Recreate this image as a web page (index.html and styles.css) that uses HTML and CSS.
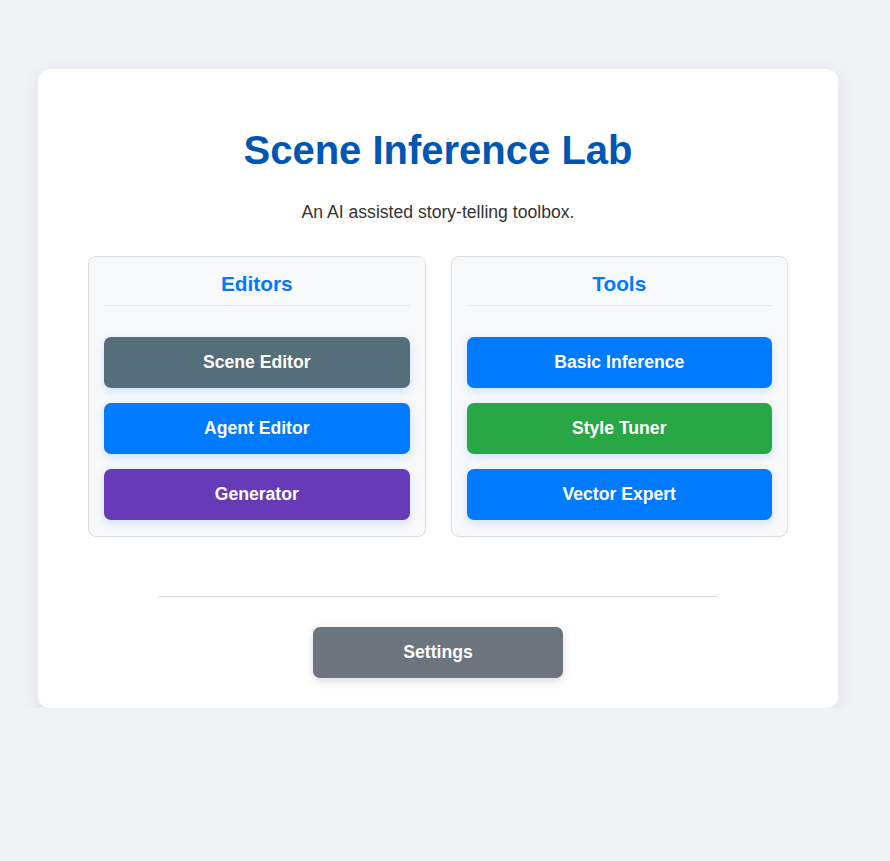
FILE: index.html
```html
<!DOCTYPE html>
<html lang="en">
<head>
<meta charset="utf-8">
<title>Scene Inference Lab</title>
<link rel="stylesheet" href="styles.css">
</head>
<body>
<main class="card">
  <h1 class="title">Scene Inference Lab</h1>
  <p class="subtitle">An AI assisted story-telling toolbox.</p>
  <div class="panels">
    <section class="panel">
      <h2 class="panel-title">Editors</h2>
      <div class="btn-list">
        <button class="btn btn-slate">Scene Editor</button>
        <button class="btn btn-blue">Agent Editor</button>
        <button class="btn btn-purple">Generator</button>
      </div>
    </section>
    <section class="panel">
      <h2 class="panel-title">Tools</h2>
      <div class="btn-list">
        <button class="btn btn-blue">Basic Inference</button>
        <button class="btn btn-green">Style Tuner</button>
        <button class="btn btn-blue">Vector Expert</button>
      </div>
    </section>
  </div>
  <hr class="divider">
  <div class="footer">
    <button class="btn btn-gray btn-settings">Settings</button>
  </div>
</main>
</body>
</html>
```

FILE: styles.css
```css
html, body {
  margin: 0;
  padding: 0;
}
body {
  background: #f0f2f5;
  font-family: "Liberation Sans", Arial, Helvetica, sans-serif;
  color: #333;
}
.card {
  box-sizing: border-box;
  width: 800px;
  margin: 69px 0 0 38px;
  padding: 58px 50px 30px;
  background: #fff;
  border-radius: 12px;
  box-shadow: 0 4px 20px rgba(0, 0, 0, 0.08);
}
.title {
  margin: 0;
  text-align: center;
  font-size: 40px;
  line-height: 46px;
  font-weight: bold;
  color: #0056b3;
}
.subtitle {
  margin: 29px 0 0;
  text-align: center;
  font-size: 17.6px;
  line-height: 20px;
  color: #333;
}
.panels {
  display: grid;
  grid-template-columns: 1fr 1fr;
  gap: 25px;
  margin-top: 34px;
}
.panel {
  background: #f8f9fa;
  border: 1px solid #dcdde0;
  border-radius: 8px;
  padding: 15px 15px 16px;
}
.panel-title {
  margin: 0 0 31px;
  padding-bottom: 10px;
  border-bottom: 1px solid #e6e7ea;
  text-align: center;
  font-size: 20.8px;
  line-height: 23px;
  font-weight: bold;
  color: #007bff;
}
.btn-list {
  display: flex;
  flex-direction: column;
  gap: 15px;
}
.btn {
  display: block;
  height: 51px;
  width: 100%;
  border: none;
  border-radius: 7px;
  font-family: "Liberation Sans", Arial, Helvetica, sans-serif;
  font-size: 17.6px;
  font-weight: bold;
  color: #fff;
  cursor: pointer;
  box-shadow: 0 3px 10px rgba(0, 123, 255, 0.18);
}
.btn-slate { background: #546e7a; }
.btn-blue { background: #007bff; }
.btn-purple { background: #673ab7; }
.btn-green { background: #28a745; }
.btn-gray {
  background: #6c757d;
  box-shadow: 0 3px 10px rgba(0, 0, 0, 0.15);
}
.divider {
  width: 560px;
  margin: 59px auto 0;
  border: none;
  border-top: 1px solid #dddddd;
  height: 0;
}
.footer {
  display: flex;
  justify-content: center;
  margin-top: 30px;
}
.btn-settings {
  width: 250px;
}
```
